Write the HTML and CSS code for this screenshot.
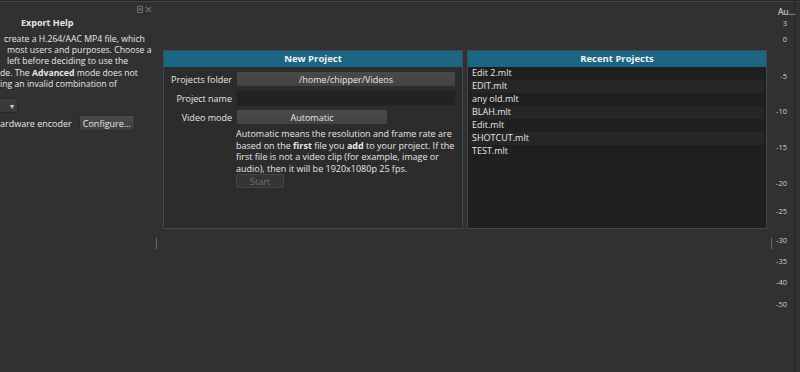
FILE: index.html
```html
<!DOCTYPE html>
<html lang="en">

<head>
    <meta charset="UTF-8">
    <meta name="viewport" content="width=device-width, initial-scale=1.0">
    <title>Shotcut</title>
    <link rel="stylesheet" href="styles.css">
</head>

<body>
    <div class="app">
        <aside class="dock">
            <div class="dock-bar">
                <svg class="dock-btn" width="6" height="7" viewBox="0 0 6 7">
                    <rect x="0.5" y="0.5" width="5" height="6" fill="none" stroke="#6a6a6a" />
                    <rect x="1.5" y="2" width="3" height="3" fill="#5a5a5a" />
                </svg>
                <svg class="dock-btn" width="7" height="7" viewBox="0 0 7 7">
                    <path d="M1 1 L6 6 M6 1 L1 6" stroke="#6a6a6a" stroke-width="1.2" />
                </svg>
            </div>
            <div class="dock-title">Export Help</div>
            <div class="help">
                <div class="help-line l1">create a H.264/AAC MP4 file, which</div>
                <div class="help-line l2">most users and purposes. Choose a</div>
                <div class="help-line l3">left before deciding to use the</div>
                <div class="help-line l4">de. The <b>Advanced</b> mode does not</div>
                <div class="help-line l5">ing an invalid combination of</div>
            </div>
            <div class="combo"><span class="combo-arrow">&#9662;</span></div>
            <div class="hw-row">
                <span>ardware encoder</span>
                <button class="btn">Configure...</button>
            </div>
        </aside>

        <div class="splitter"><span class="grip"></span></div>

        <main class="center">
            <section class="panel">
                <div class="panel-head">New Project</div>
                <div class="panel-body">
                    <div class="form-row">
                        <label>Projects folder</label>
                        <div class="field field-btn">/home/chipper/Videos</div>
                    </div>
                    <div class="form-row">
                        <label>Project name</label>
                        <div class="field field-input"></div>
                    </div>
                    <div class="form-row">
                        <label>Video mode</label>
                        <div class="field field-btn field-short">Automatic</div>
                    </div>
                    <p class="mode-note">
                        Automatic means the resolution and frame rate are<br>
                        based on the <b>first</b> file you <b>add</b> to your project. If the<br>
                        first file is not a video clip (for example, image or<br>
                        audio), then it will be 1920x1080p 25 fps.
                    </p>
                    <button class="btn btn-start" disabled>Start</button>
                </div>
            </section>

            <section class="panel">
                <div class="panel-head">Recent Projects</div>
                <ul class="recent-list">
                    <li>Edit 2.mlt</li>
                    <li>EDIT.mlt</li>
                    <li>any old.mlt</li>
                    <li>BLAH.mlt</li>
                    <li>Edit.mlt</li>
                    <li>SHOTCUT.mlt</li>
                    <li>TEST.mlt</li>
                </ul>
            </section>
        </main>

        <div class="splitter"><span class="grip"></span></div>

        <aside class="meter">
            <div class="meter-title">Au...</div>
            <div class="meter-scale">
                <span style="top: 22px">3</span>
                <span style="top: 38px">0</span>
                <span style="top: 75px">-5</span>
                <span style="top: 110px">-10</span>
                <span style="top: 146px">-15</span>
                <span style="top: 182px">-20</span>
                <span style="top: 210px">-25</span>
                <span style="top: 239px">-30</span>
                <span style="top: 260px">-35</span>
                <span style="top: 281px">-40</span>
                <span style="top: 303px">-50</span>
            </div>
        </aside>
    </div>
</body>

</html>
```

FILE: styles.css
```css
body {
    margin: 0;
    background: #323131;
    color: #e6e6e6;
    font-family: "Open Sans", "Noto Sans", sans-serif;
    font-size: 9px;
    overflow: hidden;
}

.app {
    display: flex;
    width: 800px;
    height: 372px;
    border-top: 1px solid #262626;
    box-shadow: inset 0 1px 0 #444;
    box-sizing: border-box;
}

/* left dock */
.dock {
    width: 155px;
    flex: none;
    overflow: hidden;
    position: relative;
}

.dock-bar {
    display: flex;
    justify-content: flex-end;
    gap: 2px;
    padding: 5px 3px 0 0;
    height: 8px;
}

.dock-title {
    margin-top: 2px;
    padding-left: 21px;
    font-weight: bold;
    font-size: 9px;
}

.help {
    margin-top: 5px;
    font-size: 8.7px;
    line-height: 11.2px;
}

.help-line {
    white-space: nowrap;
}

.l1 { padding-left: 4px; }
.l2 { padding-left: 7px; }
.l3 { padding-left: 7px; }
.l4 { padding-left: 0; }
.l5 { padding-left: 0; }

.combo {
    margin-top: 8px;
    margin-left: -10px;
    width: 28px;
    height: 15px;
    background: #3a3a3a;
    border: 1px solid #2a2a2a;
    border-radius: 2px;
    box-sizing: border-box;
    position: relative;
}

.combo-arrow {
    position: absolute;
    right: 3px;
    top: 1px;
    font-size: 8px;
    color: #ccc;
}

.hw-row {
    display: flex;
    align-items: center;
    gap: 7px;
    margin-top: 2px;
}

.btn {
    font-family: inherit;
    font-size: 9px;
    color: #e6e6e6;
    background: linear-gradient(#4a4a4a, #3e3e3e);
    border: 1px solid #2a2a2a;
    border-radius: 2px;
    height: 16px;
    padding: 0 3px;
}

/* splitters */
.splitter {
    width: 3px;
    flex: none;
    position: relative;
}

.grip {
    position: absolute;
    left: 1px;
    top: 237px;
    width: 1px;
    height: 11px;
    background: #6a6a6a;
}

/* centre */
.center {
    width: 612px;
    flex: none;
    box-sizing: border-box;
    display: flex;
    gap: 4px;
    padding: 49px 4px 0 5px;
    align-items: flex-start;
}

.panel {
    width: 300px;
    height: 179px;
    flex: none;
    display: flex;
    flex-direction: column;
    border: 1px solid #3b4950;
    box-shadow: inset 0 0 0 1px #262b2e;
    box-sizing: border-box;
    background: #2d2c2c;
}

.panel-head {
    height: 16px;
    line-height: 16px;
    background: #1d6584;
    text-align: center;
    font-weight: bold;
    font-size: 9.5px;
    color: #f2f2f2;
    flex: none;
}

.panel-body {
    padding: 4px 6px 0 0;
}

.form-row {
    display: flex;
    align-items: center;
    gap: 4px;
    margin-bottom: 3px;
}

.form-row label {
    width: 68px;
    text-align: right;
    flex: none;
}

.field {
    height: 16px;
    line-height: 16px;
    flex: 1;
    text-align: center;
    box-sizing: border-box;
}

.field-btn {
    background: linear-gradient(#4a4a4a, #434343);
    border: 1px solid #2c2c2c;
    border-radius: 2px;
}

.field-short {
    flex: none;
    width: 152px;
}

.field-input {
    background: #222;
    border: 1px solid #282828;
}

.mode-note {
    margin: 3px 0 0 72px;
    line-height: 11.5px;
    white-space: nowrap;
}

.btn-start {
    margin: 0 0 0 72px;
    width: 48px;
    height: 14px;
    color: #6e6e6e;
    background: #363535;
    border: 1px solid #444;
}

.recent-list {
    list-style: none;
    margin: 0;
    padding: 0 2px;
    flex: 1;
    background: #1f1f1f;
}

.recent-list li {
    height: 13px;
    line-height: 12px;
    padding-left: 2px;
}

.recent-list li:nth-child(even) {
    background: #262626;
}

/* audio meter */
.meter {
    width: 21px;
    flex: none;
    border-right: 1px solid #262626;
    margin-right: 5px;
    position: relative;
}

.meter-title {
    padding: 5px 0 0 5px;
    font-size: 8.5px;
    white-space: nowrap;
}

.meter-scale span {
    position: absolute;
    right: 7px;
    font-size: 7.5px;
    color: #cfcfcf;
    transform: translateY(-50%);
}
```
